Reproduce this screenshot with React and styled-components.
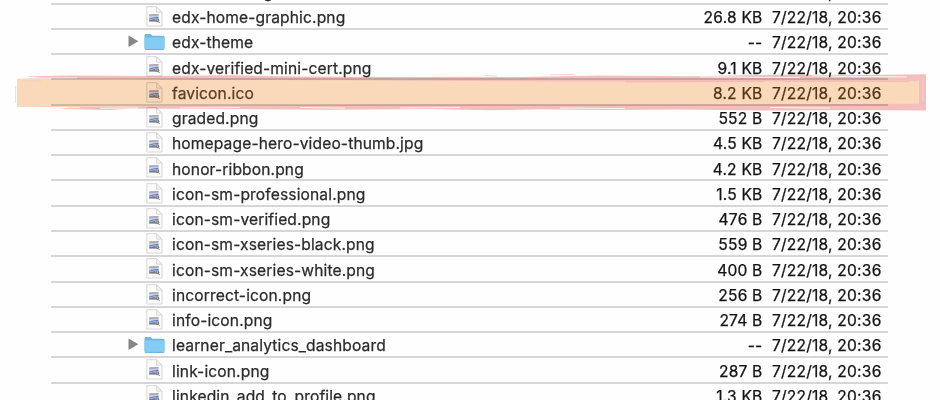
import React from "react";
import styled, { createGlobalStyle, css } from "styled-components";

const GlobalStyle = createGlobalStyle`
  * { box-sizing: border-box; }
  body { margin: 0; background: #fefefe; overflow: hidden; }
`;

const Window = styled.main`
  position: relative;
  width: 940px;
  height: 400px;
  overflow: hidden;
  background: #fefefe;
  font-family: Inter, "Liberation Sans", sans-serif;
  font-size: 15.6px;
  color: #2b2b2b;
`;

const FileList = styled.div`
  display: flex;
  flex-direction: column;
  width: 837px;
  margin: -20.7px 0 0 51px;
`;

const Row = styled.div`
  display: grid;
  grid-template-columns: 93px 28px 1fr 90px 119px;
  align-items: center;
  flex: none;
  height: 25.27px;
  padding-right: 6.5px;
  border-bottom: 2px solid #d6d6d6;
  white-space: nowrap;
  --name-color: ${(p) => (p.$marked ? "#5f4a33" : "#2b2b2b")};
  --value-color: ${(p) => (p.$marked ? "#573c1c" : "#141414")};
`;

const Disclosure = styled.span`
  display: flex;
  justify-content: flex-end;
  padding-right: 5px;
`;

const IconCell = styled.span`
  display: flex;
  justify-content: center;
  width: 21px;
`;

const Text = styled.span`
  line-height: 20px;
  padding-top: 3.4px;
  letter-spacing: 0.12px;
  color: var(--name-color);
  -webkit-text-stroke: 0.25px currentColor;
  ${(p) =>
    p.$end &&
    css`
      text-align: right;
      color: var(--value-color);
      letter-spacing: 0.2px;
    `}
`;

const Highlight = styled.svg`
  position: absolute;
  left: 0;
  top: 68px;
  mix-blend-mode: multiply;
`;

function Triangle() {
  return (
    <svg width="11" height="13" viewBox="0 0 11 13">
      <path d="M.5.5 10.3 6.2.5 12Z" fill="#868686" />
    </svg>
  );
}

function Folder() {
  return (
    <svg width="21" height="18" viewBox="0 0 21 18">
      <path d="M.5 15V2.2Q.5 1 1.7 1h5l1.8 1.7h10.8q1.2 0 1.2 1.2V15Z" fill="#6fb9df" />
      <path d="M.5 4.5h20v11q0 1.2-1.2 1.2H1.7Q.5 16.7.5 15.5Z" fill="#83ccf3" />
      <path d="M1 16.4h19" stroke="#68b4dc" />
    </svg>
  );
}

function ImageFile() {
  return (
    <svg width="17" height="21" viewBox="0 0 17 21">
      <path d="M.8.7h9.7l5.5 5.5v13.8H.8Z" fill="#fcfcfc" stroke="#cecece" strokeWidth=".8" />
      <path d="M10.5.7v5.5H16Z" fill="#f3f3f3" stroke="#cecece" strokeWidth=".7" />
      <path d="m3.2 8.6 9.3-.5v7.4H3.2Z" fill="#bccdee" />
      <path d="m3.2 8.5 9.3-.4v1.3l-9.3.5Z" fill="#b0a59f" />
      <path d="M3.2 13.2q4-1.6 9.3-1.9" fill="none" stroke="#5c82cd" strokeWidth="1.2" />
      <path d="m3.2 14.3 5.5-1.2 1.3 2.4H3.2Z" fill="#777a83" />
      <circle cx="11.3" cy="14.3" r="2" fill="#85807f" />
      <circle cx="11.3" cy="14.1" r=".8" fill="#b9b5b3" />
      <path d="m12.5 15.7 1.2 1.4" stroke="#85807f" />
    </svg>
  );
}

const files = [
  ["edx-branding", "--", "folder"],
  ["edx-home-graphic.png", "26.8 KB"],
  ["edx-theme", "--", "folder", true],
  ["edx-verified-mini-cert.png", "9.1 KB"],
  ["favicon.ico", "8.2 KB"],
  ["graded.png", "552 B"],
  ["homepage-hero-video-thumb.jpg", "4.5 KB"],
  ["honor-ribbon.png", "4.2 KB"],
  ["icon-sm-professional.png", "1.5 KB"],
  ["icon-sm-verified.png", "476 B"],
  ["icon-sm-xseries-black.png", "559 B"],
  ["icon-sm-xseries-white.png", "400 B"],
  ["incorrect-icon.png", "256 B"],
  ["info-icon.png", "274 B"],
  ["learner_analytics_dashboard", "--", "folder", true],
  ["link-icon.png", "287 B"],
  ["linkedin_add_to_profile.png", "1.3 KB"],
];

function BrushHighlight() {
  return (
    <Highlight width="940" height="48" viewBox="0 0 940 48">
      <path
        d="M25 8.500 70 7.600 150 8 230 7.300 300 8.600 400 9 470 8.800 520 9 600 7.500 690 8.200 780 6.800 860 7 926 6.300V42.500L850 42 780 42.600 680 41.500 600 42 540 41.300 490 42.300 430 41 330 41.800 220 41 130 40.500 110 42 60 41 70 39 17 38.500V11L40 9.500Z"
        fill="#f4bfbd"
      />
      <path
        d="M17 10.800H120L200 12 350 12.300 550 13.500H700L919 12.700V35.800L700 36.500H400L300 37 160 38 120 38.700H17Z"
        fill="#fadabb"
      />
      <g fill="none" stroke="#fff" strokeWidth=".8">
        <path d="M17 10h60M700 8.800l100 .8M812 8l95 1M30 39.500l50 .3M100 40.300l38-.4M180 40l60-.5M300 39.500l45 .6M400 40l60-.6M560 40l65 .6M770 39.500l60 .6" />
      </g>
      <path d="M923 10v24" stroke="#f9d7d4" strokeWidth=".7" />
      <g fill="none" stroke="#f2c5c1" strokeWidth=".7">
        <path d="M23 13h18M485 7.500l12 .6M550 6.800l24-.4M15.700 18v17" />
        <path d="M625 14l140-.6M780 13.300l130 .4" stroke="#f2b4aa" />
      </g>
    </Highlight>
  );
}

export default function App() {
  return (
    <Window>
      <GlobalStyle />
      <FileList>
        {files.map(([name, size, kind, closed]) => (
          <Row key={name} $marked={name === "favicon.ico"}>
            <Disclosure>{closed && <Triangle />}</Disclosure>
            <IconCell>{kind ? <Folder /> : <ImageFile />}</IconCell>
            <Text>{name}</Text>
            <Text $end>{size}</Text>
            <Text $end>7/22/18, 20:36</Text>
          </Row>
        ))}
      </FileList>
      <BrushHighlight />
    </Window>
  );
}
